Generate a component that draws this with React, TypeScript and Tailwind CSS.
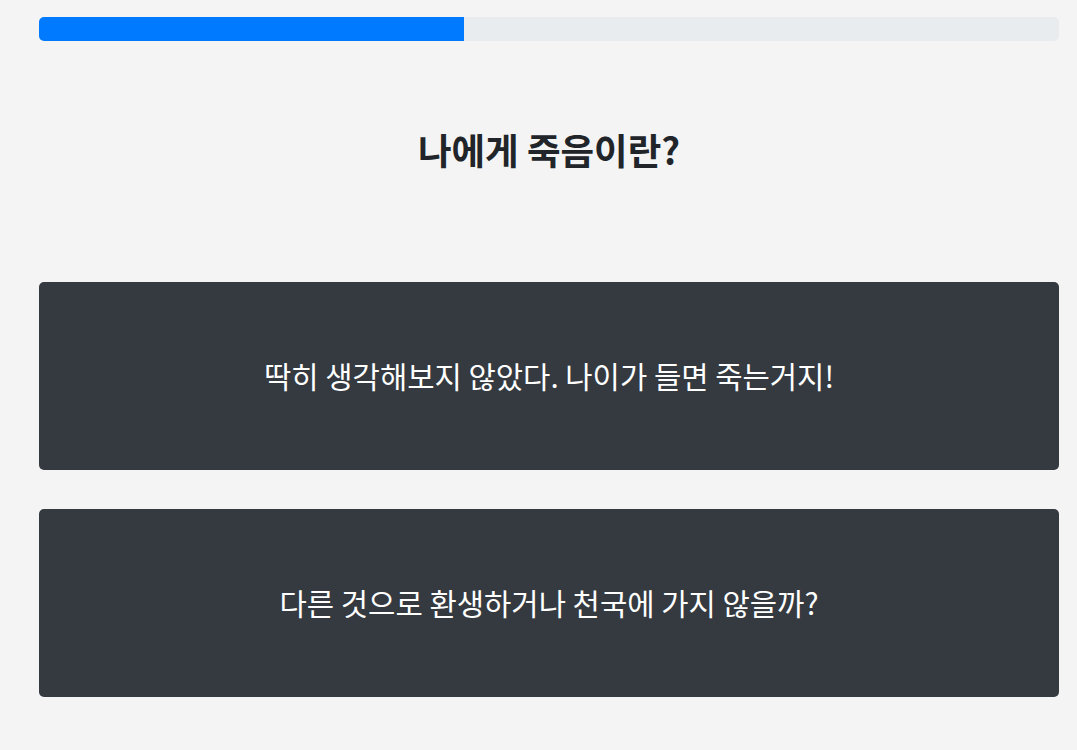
const answers = [
  "딱히 생각해보지 않았다. 나이가 들면 죽는거지!",
  "다른 것으로 환생하거나 천국에 가지 않을까?",
];

const App = () => {
  return (
    <div
      className="min-h-[750px] w-full bg-[#f4f4f4] pl-[39px] pr-[18px] pt-[17px]"
      style={{ fontFamily: '"Noto Sans CJK KR", "Noto Sans", sans-serif' }}
    >
      <div className="h-6 w-full rounded-[5px] bg-[#e9ecef] overflow-hidden">
        <div className="h-full w-[425px] bg-[#007bff]"></div>
      </div>
      <div className="h-[241px] flex items-center justify-center">
        <h1 className="text-[36.5px] font-bold text-[#212529] pb-[22px]">나에게 죽음이란?</h1>
      </div>
      <div className="flex flex-col gap-[39px]">
        {answers.map((a) => (
          <button
            key={a}
            className="h-[188px] w-full rounded-[5px] bg-[#343a40] text-white text-[29.7px] flex items-center justify-center"
          >
            {a}
          </button>
        ))}
      </div>
    </div>
  );
};

export default App;
